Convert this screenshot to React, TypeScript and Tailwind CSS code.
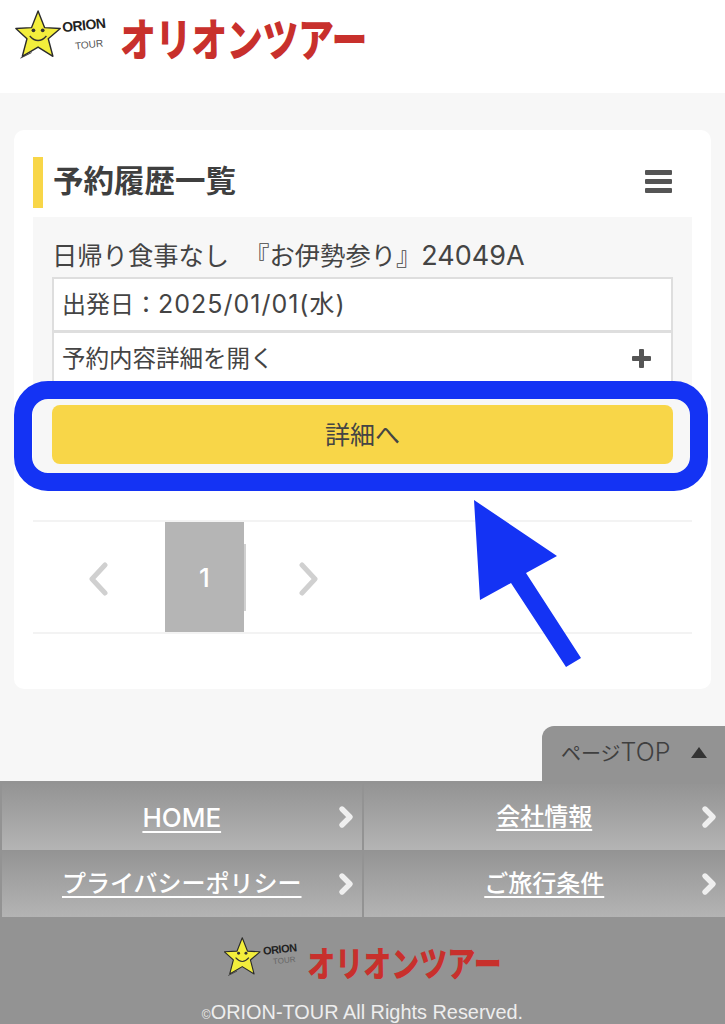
import React from 'react';
import { ChevronRight } from 'lucide-react';

const font = { fontFamily: 'Inter, "Noto Sans CJK JP", "Noto Sans", sans-serif' };
const logoFont = { fontFamily: '"Noto Sans CJK JP", "Noto Sans", sans-serif' };

// ロゴ（星 + ORION TOUR + カタカナ）
const Star: React.FC<{ size: number }> = ({ size }) => (
    <svg width={size} height={size} viewBox="0 0 50 54" className="shrink-0">
        <polygon
            points="24,1 31,19 48,20 35,31 40,50 24,40 7,50 12,31 0,20 17,19"
            fill="#f3ee3c"
            stroke="#2b2b2b"
            strokeWidth="1.5"
            strokeLinejoin="round"
        />
        <circle cx="19" cy="22" r="2" fill="#333" />
        <circle cx="29" cy="22" r="2" fill="#333" />
        <path d="M15 28 Q24 38 33 28" fill="none" stroke="#333" strokeWidth="1.5" />
        <path d="M17 46 L5 52" fill="none" stroke="#333" strokeWidth="1" />
    </svg>
);

const HeaderLogo: React.FC = () => (
    <div className="flex items-center" style={logoFont}>
        <Star size={50} />
        <div className="relative w-[42px] h-[40px] -ml-[2px] text-[#222]" style={{ fontFamily: '"Liberation Sans", sans-serif' }}>
            <span className="absolute left-0 top-[3px] text-[14px] leading-none font-bold -rotate-6 tracking-[-0.5px]">ORION</span>
            <span className="absolute left-[13px] top-[25px] text-[10px] leading-none -rotate-6 text-[#555]">TOUR</span>
        </div>
        <span className="ml-[16px] mt-[4px] text-[36px] leading-none font-black text-[#c8302c] tracking-[-0.4px] whitespace-nowrap scale-y-125">オリオンツアー</span>
    </div>
);

const FooterLogo: React.FC = () => (
    <div className="flex items-center" style={logoFont}>
        <Star size={40} />
        <div className="relative w-[34px] h-[30px] text-[#222]" style={{ fontFamily: '"Liberation Sans", sans-serif' }}>
            <span className="absolute left-0 top-[2px] text-[11px] leading-none font-bold -rotate-6 tracking-[-0.5px]">ORION</span>
            <span className="absolute left-[10px] top-[15px] text-[8px] leading-none -rotate-6 text-[#666]">TOUR</span>
        </div>
        <span className="ml-[10px] mt-[9px] text-[28px] leading-none font-black text-[#c8302c] whitespace-nowrap scale-y-125">オリオンツアー</span>
    </div>
);

const PagerChevron: React.FC<{ flip?: boolean }> = ({ flip }) => (
    <svg width="20" height="34" viewBox="0 0 20 34" fill="none" className={flip ? '-scale-x-100' : ''}>
        <path d="M17 3 L4 17 L17 31" stroke="#d0d0d0" strokeWidth="5" strokeLinecap="round" strokeLinejoin="round" />
    </svg>
);

const navItems = ['HOME', '会社情報', 'プライバシーポリシー', 'ご旅行条件'];

export default function App() {
    return (
        <div className="relative w-[725px] h-[1024px] overflow-hidden bg-[#f7f7f7] flex flex-col" style={font}>
            {/* ヘッダー */}
            <header className="h-[93px] bg-white flex items-start pl-[14px] pt-[10px] shrink-0">
                <HeaderLogo />
            </header>

            {/* カード */}
            <main className="mx-[14px] mt-[37px] h-[559px] bg-white rounded-[10px] px-[19px] pt-[27px] shrink-0">
                <div className="flex items-center justify-between h-[51px] border-l-[10px] border-[#f8d648] pl-[10px] pr-[20px]">
                    <h2 className="text-[30.5px] leading-none font-bold text-[#3f3f3f] pb-[2px]">予約履歴一覧</h2>
                    <div className="flex flex-col gap-[4px] w-[27px] mb-[2px]">
                        <span className="h-[5px] bg-[#555] rounded-[1px]" />
                        <span className="h-[5px] bg-[#555] rounded-[1px]" />
                        <span className="h-[5px] bg-[#555] rounded-[1px]" />
                    </div>
                </div>

                {/* 予約 */}
                <div className="mt-[9px] h-[268px] bg-[#f7f7f7] px-[19px] pt-[21px] text-[#444]">
                    <p className="text-[25.3px] leading-[36px] h-[39px] pt-[1px] -mt-[1px] whitespace-nowrap">
                        日帰り食事なし <span className="ml-[8px]">『お伊勢参り』</span><span className="text-[27px]">24049A</span>
                    </p>
                    <div className="h-[55px] mt-[1px] bg-white border-2 border-[#dedede] pl-[8px] flex items-center text-[24px]">
                        <span>出発日：<span className="text-[25px] tracking-[1px]">2025/01/01(水)</span></span>
                    </div>
                    <div className="h-[56px] -mt-[1px] bg-white border-x-2 border-t-2 border-[#dedede] pl-[8px] pr-[20px] pb-[3px] flex items-center justify-between text-[23.5px]">
                        <span>予約内容詳細を開く</span>
                        <span className="relative w-[19px] h-[19px]">
                            <span className="absolute left-[7px] top-0 w-[5px] h-[19px] bg-[#555] rounded-[1px]" />
                            <span className="absolute left-0 top-[7px] w-[19px] h-[5px] bg-[#555] rounded-[1px]" />
                        </span>
                    </div>
                    <button className="mt-[18px] w-full h-[59px] bg-[#f8d648] rounded-[8px] text-[25px] text-[#444] pt-[3px]">詳細へ</button>
                </div>

                {/* ページャー */}
                <div className="mt-[35px] h-[114px] border-y-2 border-[#f3f3f3] flex items-stretch">
                    <div className="w-[132px] flex items-center justify-end pr-[57px] pt-[4px]">
                        <PagerChevron />
                    </div>
                    <div className="w-[79px] bg-[#b5b5b5] text-white flex items-center justify-center text-[26px] font-medium">1</div>
                    <div className="w-[2px] h-[67px] self-center bg-[#d0d0d0]" />
                    <div className="w-[73px] flex items-center justify-end pt-[4px]">
                        <PagerChevron flip />
                    </div>
                </div>
            </main>

            {/* フッター */}
            <footer className="mt-auto bg-[#939393] shrink-0">
                <div className="grid grid-cols-2 pt-[3px] gap-y-px">
                    {navItems.map((item, i) => (
                        <a
                            key={item}
                            className={`relative h-[66px] flex items-center justify-center bg-gradient-to-b from-[#949494] to-[#b4b4b4] text-white font-medium underline underline-offset-4 decoration-2 ${item === 'HOME' ? 'text-[26px]' : 'text-[24px]'} ${i % 2 === 0 ? 'ml-[2px] mr-px' : 'ml-px'}`}
                        >
                            {item}
                            <ChevronRight size={32} strokeWidth={4} className="absolute right-[0px] top-[17px] text-[#efefef]" />
                        </a>
                    ))}
                </div>
                <div className="h-[107px] flex flex-col items-center pt-[20px]">
                    <FooterLogo />
                    <p className="mt-[26px] text-[19.9px] leading-none text-[#eeeeee] whitespace-nowrap" style={{ fontFamily: '"Liberation Sans", sans-serif' }}>
                        <span className="text-[12px]">©</span>ORION-TOUR All Rights Reserved.
                    </p>
                </div>
            </footer>

            {/* ページTOP */}
            <div className="absolute right-0 top-[726px] w-[183px] h-[55px] bg-[#939393] rounded-tl-[12px] flex items-center justify-between pl-[19px] pr-[18px] pb-[2px] text-[#3f3f3f] text-[20px]">
                <span className="whitespace-nowrap">ページ<span className="text-[25px] font-light">TOP</span></span>
                <span className="w-0 h-0 border-x-[8px] border-x-transparent border-b-[11px] border-b-[#333]" />
            </div>

            {/* 注釈：青枠と矢印 */}
            <div className="absolute left-[14px] top-[381px] w-[694px] h-[110px] rounded-[34px] border-[18px] border-[#1433f4]" />
            <svg className="absolute left-[470px] top-[498px]" width="115" height="172" viewBox="0 0 115 172">
                <polygon points="4,2 87,58 56,75 111,160 96,169 41,85 10,102" fill="#1433f4" />
            </svg>
        </div>
    );
}
